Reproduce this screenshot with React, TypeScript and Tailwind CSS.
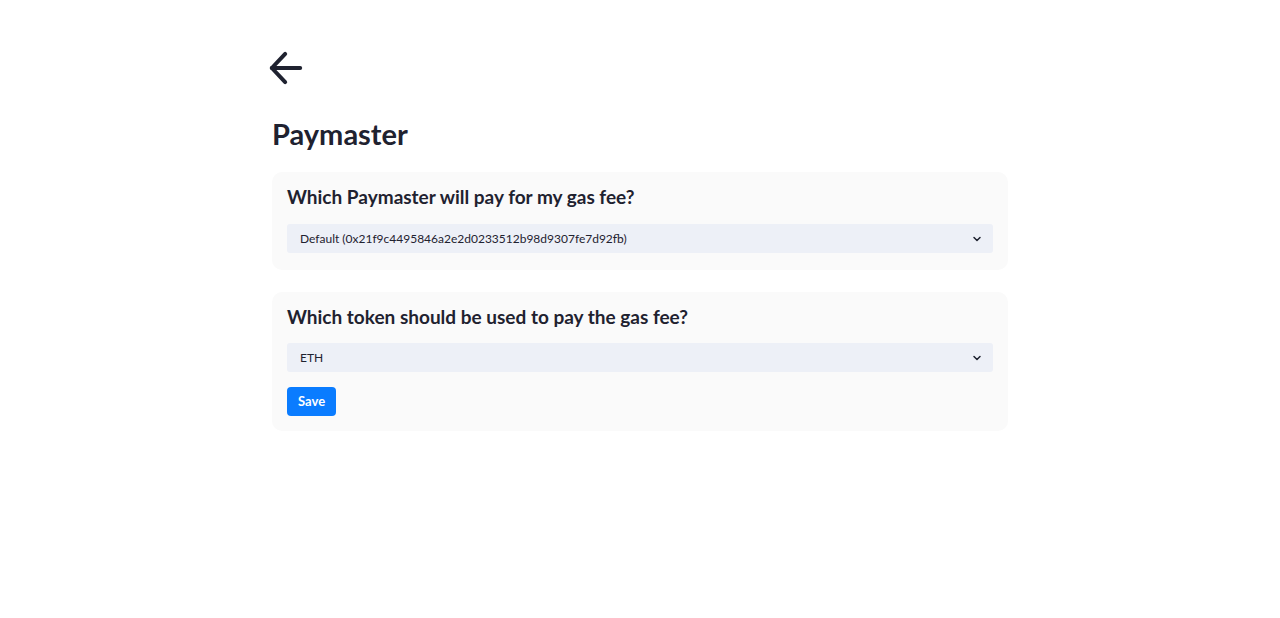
import { ChevronDown } from "lucide-react";

const selectClass =
  "w-full appearance-none rounded-[3px] bg-[#edf0f7] py-[6px] pl-[13px] pr-10 text-[12px] leading-[17px] text-[#1f2230] outline-none";

function SelectBox({ value }: { value: string }) {
  return (
    <div className="relative">
      <select className={selectClass} defaultValue={value}>
        <option>{value}</option>
      </select>
      <ChevronDown
        className="pointer-events-none absolute right-[10px] top-1/2 h-[12px] w-[12px] -translate-y-1/2 text-[#1f2230]"
        strokeWidth={3}
      />
    </div>
  );
}

export default function App() {
  return (
    <main className="min-h-screen bg-white font-['Lato',sans-serif] text-[#1f2230]">
      <div className="mx-auto max-w-3xl px-4 pt-[48px]">
        <button type="button" className="-ml-[6px] block">
          <svg width="40" height="40" viewBox="0 0 24 24" fill="none" stroke="currentColor" strokeWidth="2.4" strokeLinecap="round" strokeLinejoin="round">
            <path d="M20.5 12H3.5" />
            <path d="M11.5 3.5L3.5 12l8 8.5" />
          </svg>
        </button>

        <h1 className="mt-[28px] text-[29px] font-bold leading-[36px]">Paymaster</h1>

        <div className="mt-[20px] space-y-[22px]">
          <section className="rounded-[10px] bg-[#fafafa] px-[15px] pb-[17px] pt-[12px]">
            <h2 className="text-[19px] font-bold leading-[26px]">Which Paymaster will pay for my gas fee?</h2>
            <div className="mt-[14px]">
              <SelectBox value="Default (0x21f9c4495846a2e2d0233512b98d9307fe7d92fb)" />
            </div>
          </section>

          <section className="rounded-[10px] bg-[#fafafa] px-[15px] pb-[15px] pt-[12px]">
            <h2 className="text-[19px] font-bold leading-[26px]">Which token should be used to pay the gas fee?</h2>
            <div className="mt-[13px]">
              <SelectBox value="ETH" />
            </div>
            <button
              type="button"
              className="mt-[15px] rounded-[4px] bg-[#0a7cff] px-[11px] py-[5px] text-[13px] font-bold leading-[19px] text-white"
            >
              Save
            </button>
          </section>
        </div>
      </div>
    </main>
  );
}
